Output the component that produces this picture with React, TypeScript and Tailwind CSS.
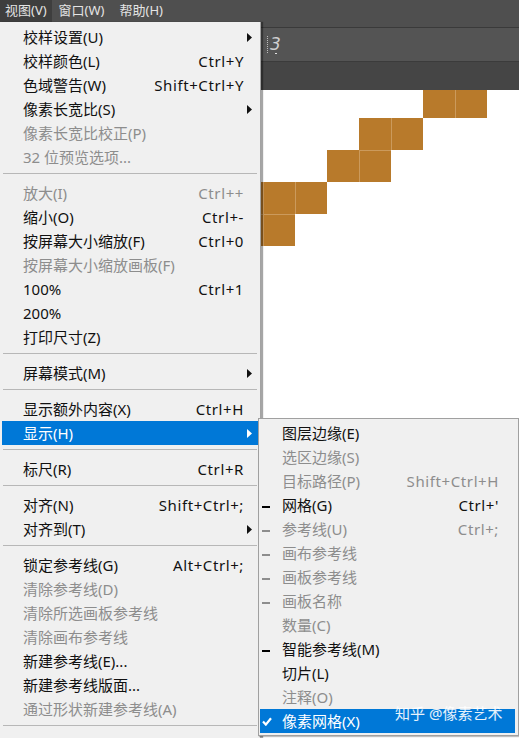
import React from "react";

type MenuItem =
  | { sep: true }
  | {
      sep?: false;
      label: string;
      shortcut?: string;
      disabled?: boolean;
      sub?: boolean;
      active?: boolean;
      mark?: "dash" | "check";
    };

const viewMenu: MenuItem[] = [
  { label: "校样设置(U)", sub: true },
  { label: "校样颜色(L)", shortcut: "Ctrl+Y" },
  { label: "色域警告(W)", shortcut: "Shift+Ctrl+Y" },
  { label: "像素长宽比(S)", sub: true },
  { label: "像素长宽比校正(P)", disabled: true },
  { label: "32 位预览选项...", disabled: true },
  { sep: true },
  { label: "放大(I)", shortcut: "Ctrl++", disabled: true },
  { label: "缩小(O)", shortcut: "Ctrl+-" },
  { label: "按屏幕大小缩放(F)", shortcut: "Ctrl+0" },
  { label: "按屏幕大小缩放画板(F)", disabled: true },
  { label: "100%", shortcut: "Ctrl+1" },
  { label: "200%" },
  { label: "打印尺寸(Z)" },
  { sep: true },
  { label: "屏幕模式(M)", sub: true },
  { sep: true },
  { label: "显示额外内容(X)", shortcut: "Ctrl+H" },
  { label: "显示(H)", sub: true, active: true },
  { sep: true },
  { label: "标尺(R)", shortcut: "Ctrl+R" },
  { sep: true },
  { label: "对齐(N)", shortcut: "Shift+Ctrl+;" },
  { label: "对齐到(T)", sub: true },
  { sep: true },
  { label: "锁定参考线(G)", shortcut: "Alt+Ctrl+;" },
  { label: "清除参考线(D)", disabled: true },
  { label: "清除所选画板参考线", disabled: true },
  { label: "清除画布参考线", disabled: true },
  { label: "新建参考线(E)..." },
  { label: "新建参考线版面..." },
  { label: "通过形状新建参考线(A)", disabled: true },
  { sep: true },
];

const showMenu: MenuItem[] = [
  { label: "图层边缘(E)" },
  { label: "选区边缘(S)", disabled: true },
  { label: "目标路径(P)", shortcut: "Shift+Ctrl+H", disabled: true },
  { label: "网格(G)", shortcut: "Ctrl+'", mark: "dash" },
  { label: "参考线(U)", shortcut: "Ctrl+;", mark: "dash", disabled: true },
  { label: "画布参考线", mark: "dash", disabled: true },
  { label: "画板参考线", mark: "dash", disabled: true },
  { label: "画板名称", mark: "dash", disabled: true },
  { label: "数量(C)", disabled: true },
  { label: "智能参考线(M)", mark: "dash" },
  { label: "切片(L)" },
  { label: "注释(O)", disabled: true },
  { label: "像素网格(X)", mark: "check", active: true },
];

const Arrow = () => (
  <svg width="5" height="9" viewBox="0 0 5 9">
    <path d="M0 0L5 4.5L0 9Z" fill="currentColor" />
  </svg>
);

const Check = () => (
  <svg width="10" height="9" viewBox="0 0 10 9">
    <path d="M1 4.6L3.8 7.6L9 1.2" fill="none" stroke="currentColor" strokeWidth="2.2" />
  </svg>
);

const textColor = (item: { disabled?: boolean; active?: boolean }) =>
  item.active ? "bg-[#0078d7] text-white" : item.disabled ? "text-[#8d8d8d]" : "text-[#111]";

// cells of the brush stroke on the canvas, page coordinates
const cells = [
  [423, 86], [455, 86],
  [359, 118], [391, 118],
  [327, 150], [359, 150],
  [231, 182], [263, 182], [295, 182],
  [231, 214], [263, 214],
];

const gridLines = [
  "M455.5 86V118", "M391.5 118V150", "M359.5 150V182", "M295.5 182V214", "M263.5 182V246",
  "M359 150.5H391", "M231 214.5H295",
];

const App = () => {
  return (
    <div className="relative w-[519px] h-[738px] overflow-hidden bg-white font-['Noto_Sans','Noto_Sans_CJK_SC',sans-serif]">
      <div className="flex flex-col h-full">
        <div className="h-[27px] bg-[#4f4f4f] flex items-start text-[13px] text-[#e4e4e4]">
          <div className="h-[22px] flex items-center pl-[5px] pr-[5px] bg-[#3e3e3e]">视图(V)</div>
          <div className="h-[22px] flex items-center pl-[7px] pr-[7px]">窗口(W)</div>
          <div className="h-[22px] flex items-center pl-[8px] pr-[7px]">帮助(H)</div>
        </div>
        <div className="h-px bg-[#3a3a3a]" />
        <div className="h-[33px] bg-[#545454] flex items-center pl-[267px]">
          <div className="relative h-[17px] border-l border-dotted border-[#bdbdbd] pl-[2px] text-[#d0d0d0] italic text-[17px] leading-[17px] font-['DejaVu_Sans',sans-serif] font-extralight">
            3
            <span className="absolute left-[7px] top-[17px] w-[2px] h-px bg-[#e0e0e0]" />
          </div>
        </div>
        <div className="h-px bg-[#3b3b3b]" />
        <div className="h-[28px] bg-[#454545]" />
        <div className="relative flex-1 bg-white">
          <svg width="519" height="648" className="absolute left-0 top-0">
            <g transform="translate(0 -90)">
              {cells.map(([x, y]) => (
                <rect key={`${x}-${y}`} x={x} y={y} width="32" height="32" fill="#b87a2b" />
              ))}
              {gridLines.map((d) => (
                <path key={d} d={d} stroke="#cb9a5c" strokeWidth="1" />
              ))}
            </g>
          </svg>
        </div>
      </div>

      {/* 视图 menu */}
      <div className="absolute left-0 top-[22px] w-[261px] h-[740px] bg-[#f0f0f0] border-r border-[#a3a3a3] shadow-[2px_0_1px_rgba(0,0,0,0.35)] pt-[3px] px-[2px] text-[15px]">
        {viewMenu.map((item, i) =>
          item.sep ? (
            <div key={i} className="h-[12px] pt-[4px] px-px">
              <div className="h-px bg-[#b7b7b7]" />
            </div>
          ) : (
            <div key={i} className={`h-[24px] flex items-center pl-[21px] leading-[24px] ${textColor(item)}`}>
              <span className="flex-1 whitespace-nowrap">{item.label}</span>
              {item.shortcut && <span className="whitespace-nowrap tracking-[0.6px]">{item.shortcut}</span>}
              <span className="w-[14px] flex pl-[3px]">{item.sub && <Arrow />}</span>
            </div>
          )
        )}
      </div>

      {/* 显示 submenu */}
      <div className="absolute left-[258px] top-[418px] w-[261px] bg-[#f0f0f0] border border-[#a0a0a0] shadow-[1px_1px_1px_rgba(0,0,0,0.25)] pt-[2px] pb-[2px] pl-px pr-[3px] text-[15px]">
        {showMenu.map((item, i) =>
          item.sep ? null : (
            <div key={i} className={`relative h-[24px] flex items-center pl-[22px] pr-[16px] leading-[24px] ${textColor(item)}`}>
              {item.mark === "dash" && (
                <span className={`absolute left-[2px] top-[13px] w-[8px] h-[2px] ${item.disabled ? "bg-[#8d8d8d]" : "bg-black"}`} />
              )}
              {item.mark === "check" && (
                <span className="absolute left-[2px] top-[8px] flex">
                  <Check />
                </span>
              )}
              <span className="flex-1 whitespace-nowrap">{item.label}</span>
              {item.shortcut && <span className="whitespace-nowrap tracking-[0.6px]">{item.shortcut}</span>}
            </div>
          )
        )}
      </div>

      <div className="absolute left-[395px] top-[703px] text-[15px] leading-[20px] text-white/90 whitespace-nowrap">
        知乎 @像素艺术
      </div>
    </div>
  );
};

export default App;
